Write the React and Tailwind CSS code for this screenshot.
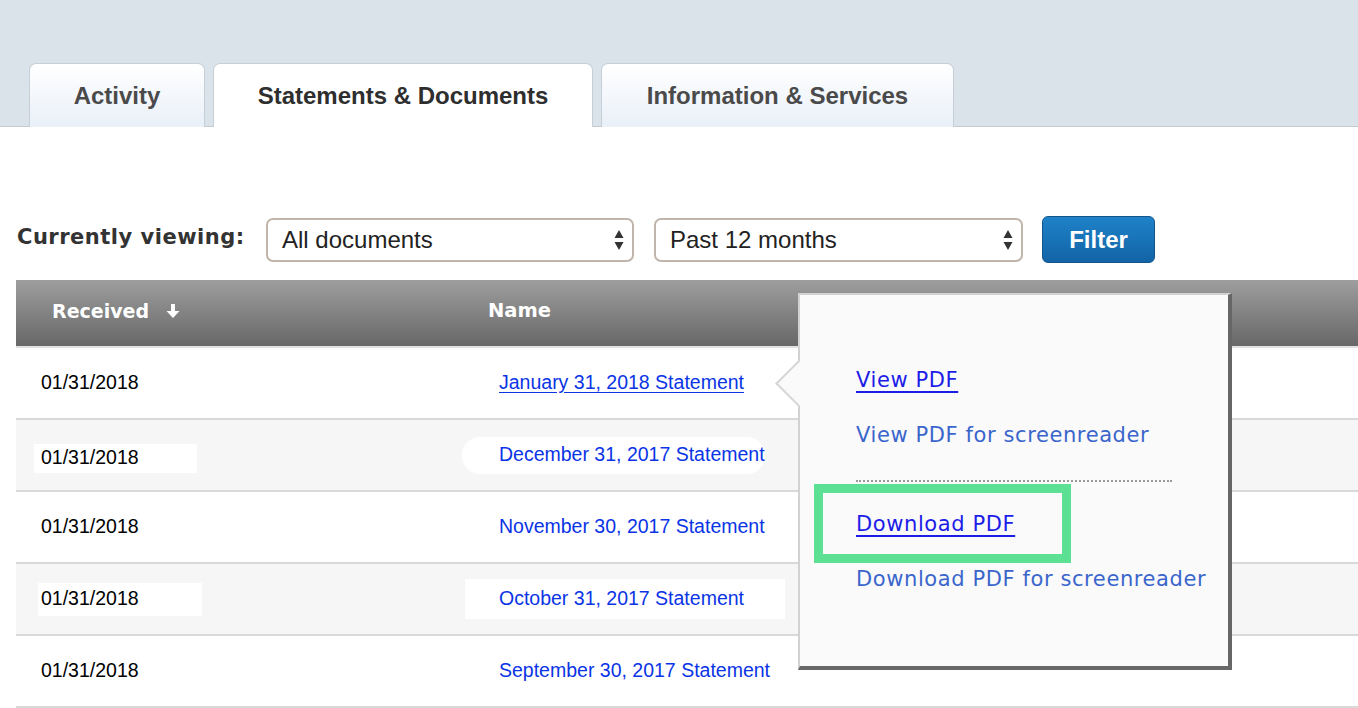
import React from "react";

const arial = "font-['Liberation_Sans',Arial,sans-serif]";
const verdana = "font-['DejaVu_Sans',Verdana,sans-serif]";

function SelectArrows() {
  return (
    <svg width="10" height="22" viewBox="0 0 10 22" className="shrink-0">
      <polygon points="5,1 9.5,9 0.5,9" fill="#333" />
      <polygon points="5,21 9.5,13 0.5,13" fill="#333" />
    </svg>
  );
}

function Select({ label, width }) {
  return (
    <div
      className={`${width} h-[44px] rounded-[7px] border-2 border-[#bfb5aa] bg-white flex items-center justify-between pl-[14px] pr-[8px]`}
    >
      <span className={`${arial} text-[24px] text-[#222] leading-none`}>{label}</span>
      <SelectArrows />
    </div>
  );
}

const rows = [
  { name: "January 31, 2018 Statement", bg: "bg-white", underline: true },
  { name: "December 31, 2017 Statement", bg: "bg-[#f6f6f6]", patch: 2 },
  { name: "November 30, 2017 Statement", bg: "bg-white" },
  { name: "October 31, 2017 Statement", bg: "bg-[#f6f6f6]", patch: 4 },
  { name: "September 30, 2017 Statement", bg: "bg-white" },
];

function DateCell({ patch }) {
  const text = <span className={`${arial} text-[19.5px] text-black leading-none`}>01/31/2018</span>;
  if (patch === 2)
    return (
      <span className="-ml-[7px] pl-[7px] w-[163px] h-[29px] bg-white flex items-center mt-[6px]">{text}</span>
    );
  if (patch === 4)
    return (
      <span className="-ml-[3px] pl-[3px] w-[164px] h-[33px] bg-white flex items-center">{text}</span>
    );
  return text;
}

function NameCell({ name, patch, underline }) {
  const text = (
    <span
      className={`${arial} text-[19.5px] text-[#0a34e6] leading-none ${underline ? "underline underline-offset-[3px]" : ""}`}
    >
      {name}
    </span>
  );
  if (patch === 2)
    return (
      <span className="-ml-[37px] pl-[37px] w-[303px] h-[37px] bg-white rounded-[18px] flex items-center">{text}</span>
    );
  if (patch === 4)
    return (
      <span className="-ml-[34px] pl-[34px] w-[320px] h-[40px] bg-white flex items-center">{text}</span>
    );
  return text;
}

export default function App() {
  return (
    <div className="relative w-[1358px] h-[708px] bg-white overflow-hidden">
      {/* Tab bar */}
      <div className="h-[127px] bg-[#dbe3ea] border-b border-[#c3ccd4] flex items-end pl-[29px] gap-[8px]">
        <div className="w-[176px] h-[64px] -mb-px rounded-t-[7px] border border-b-0 border-[#c6cfd8] bg-gradient-to-b from-white to-[#e9f0f8] flex items-center justify-center">
          <span className={`${arial} font-bold text-[24px] text-[#4a4a4a]`}>Activity</span>
        </div>
        <div className="w-[380px] h-[64px] -mb-px rounded-t-[7px] border border-b-0 border-[#c6cfd8] bg-white flex items-center justify-center">
          <span className={`${arial} font-bold text-[24px] text-[#2e2e2e]`}>Statements &amp; Documents</span>
        </div>
        <div className="w-[353px] h-[64px] -mb-px rounded-t-[7px] border border-b-0 border-[#c6cfd8] bg-gradient-to-b from-white to-[#e9f0f8] flex items-center justify-center">
          <span className={`${arial} font-bold text-[24px] text-[#4a4a4a]`}>Information &amp; Services</span>
        </div>
      </div>

      {/* Filter row */}
      <div className="mt-[89px] h-[47px] flex items-center pl-[17px]">
        <span className={`${verdana} font-bold text-[21px] tracking-[0.5px] text-[#333] w-[249px] -mt-[3px]`}>Currently viewing:</span>
        <Select label="All documents" width="w-[368px]" />
        <div className="w-[20px]" />
        <Select label="Past 12 months" width="w-[369px]" />
        <div className="w-[19px]" />
        <button className="w-[113px] h-[47px] rounded-[6px] border border-[#13568e] bg-gradient-to-b from-[#1f82c8] to-[#1264a6] flex items-center justify-center">
          <span className={`${arial} font-bold text-[24px] text-white`}>Filter</span>
        </button>
      </div>

      {/* Table */}
      <div className="mt-[17px] ml-[16px]">
        <div className="h-[66px] bg-gradient-to-b from-[#9e9e9e] to-[#686868] flex items-center">
          <div className="w-[472px] pl-[36px] flex items-center gap-[16px] -mt-[4px]">
            <span className={`${verdana} font-bold text-[19px] text-white`}>Received</span>
            <svg width="16" height="16" viewBox="0 0 16 16">
              <rect x="6" y="1" width="4" height="8" fill="white" />
              <polygon points="1.5,8 14.5,8 8,15" fill="white" />
            </svg>
          </div>
          <span className={`${verdana} font-bold text-[19.5px] text-white -mt-[4px]`}>Name</span>
        </div>
        <div className="h-[2px] bg-[#e2e2e2]" />
        {rows.map((r, i) => (
          <div key={i} className={`h-[72px] border-b-2 border-[#d9d9d9] ${r.bg} flex items-center`}>
            <div className="w-[483px] pl-[25px] flex items-center">
              <DateCell patch={r.patch} />
            </div>
            <NameCell name={r.name} patch={r.patch} underline={r.underline} />
          </div>
        ))}
      </div>

      {/* Popover */}
      <div className="absolute left-[798px] top-[293px] w-[434px] h-[377px] bg-[#fafafa] border-l-2 border-t-2 border-[#d2d2d2] border-r-4 border-r-[#676767] border-b-4 border-b-[#676767]">
        <div className="absolute -left-[18px] top-[72px] w-[33px] h-[33px] rotate-45 bg-[#fafafa] border-l-2 border-b-2 border-[#d6d6d6]" />
        <div className="absolute left-[14px] top-[189px] w-[257px] h-[79px] border-[9px] border-[#5ce093]" />
        <div className={`relative pl-[56px] pt-[71px] flex flex-col ${verdana} text-[21px] tracking-[0.6px] leading-[28px]`}>
          <span className="text-[#1d1de8] underline underline-offset-[4px]">View PDF</span>
          <span className="mt-[27px] text-[#3a66cc]">View PDF for screenreader</span>
          <div className="mt-[31px] w-[316px] border-t-2 border-dotted border-[#9a9a9a]" />
          <span className="mt-[28px] text-[#1d1de8] underline underline-offset-[4px]">Download PDF</span>
          <span className="mt-[27px] text-[#3a66cc]">Download PDF for screenreader</span>
        </div>
      </div>
    </div>
  );
}
